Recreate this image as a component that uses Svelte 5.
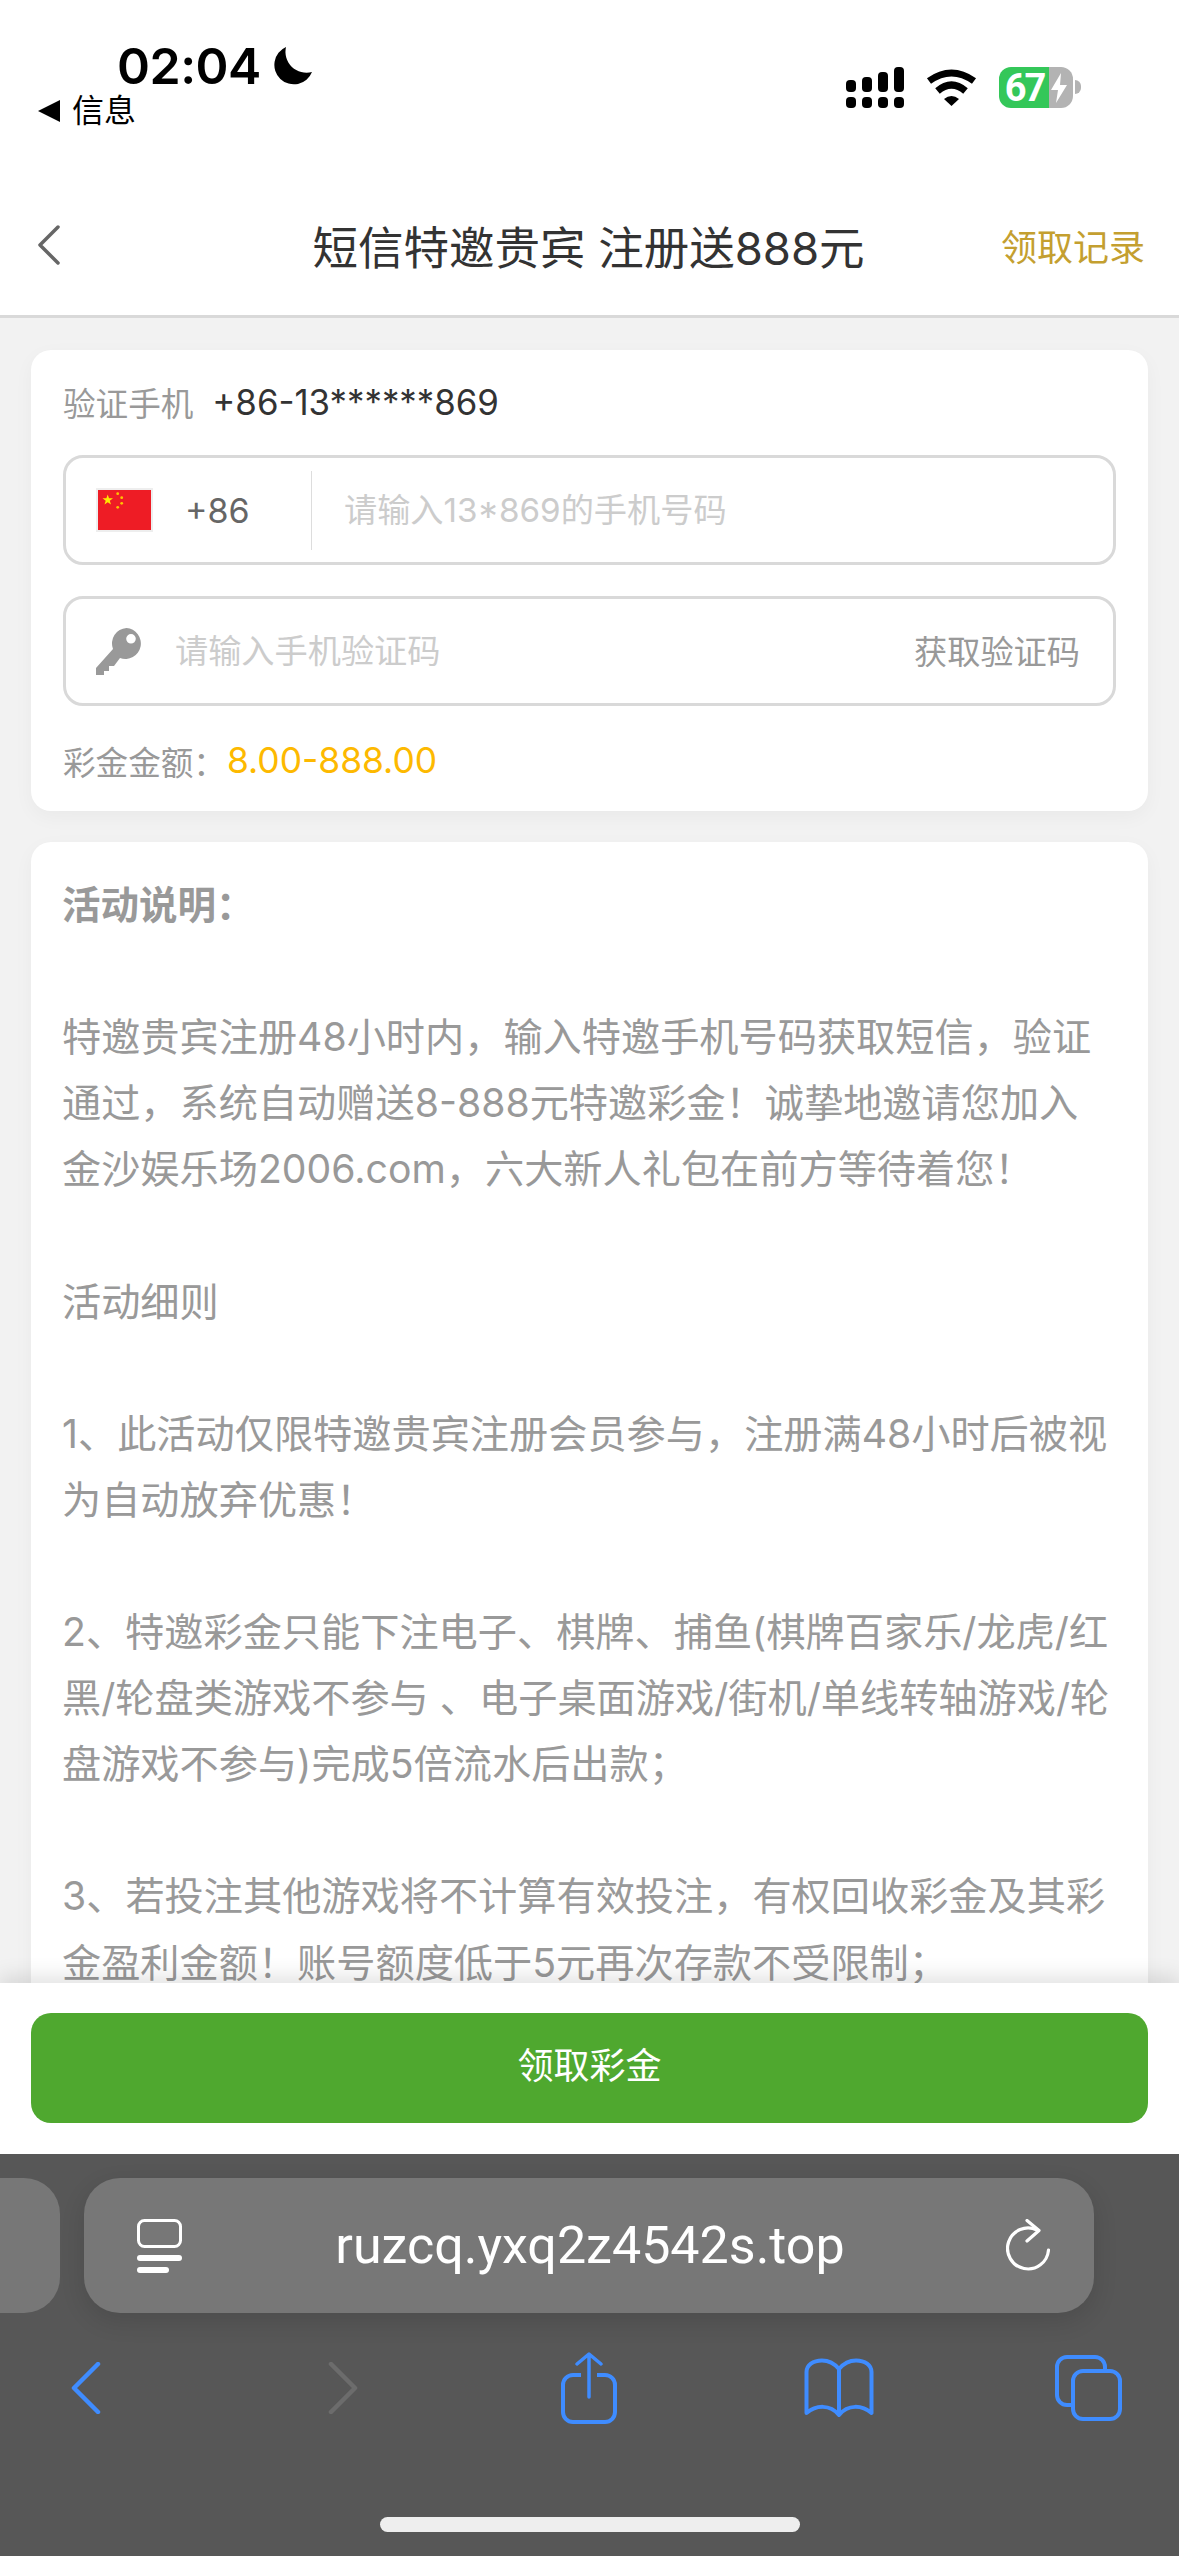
<script lang="ts">
  const lines = [
    "",
    "特邀贵宾注册48小时内，输入特邀手机号码获取短信，验证",
    "通过，系统自动赠送8-888元特邀彩金！诚挚地邀请您加入",
    "金沙娱乐场2006.com，六大新人礼包在前方等待着您！",
    "",
    "活动细则",
    "",
    "1、此活动仅限特邀贵宾注册会员参与，注册满48小时后被视",
    "为自动放弃优惠！",
    "",
    "2、特邀彩金只能下注电子、棋牌、捕鱼(棋牌百家乐/龙虎/红",
    "黑/轮盘类游戏不参与 、电子桌面游戏/街机/单线转轴游戏/轮",
    "盘游戏不参与)完成5倍流水后出款；",
    "",
    "3、若投注其他游戏将不计算有效投注，有权回收彩金及其彩",
    "金盈利金额！账号额度低于5元再次存款不受限制；",
  ];

  const signal = [
    [0, 13],
    [16, 10],
    [32, 5],
    [48, 0],
  ];
</script>

<div class="page">
  <div class="status">
    <div class="status-left">
      <div class="clock">
        <span class="time">02:04</span>
        <svg class="moon" viewBox="0 0 39 39" width="39" height="39">
          <path d="M13 0A19.5 19.5 0 1 0 39 25A21 21 0 0 1 13 0Z" fill="#000" />
        </svg>
      </div>
      <div class="origin">
        <svg viewBox="0 0 22 22" width="22" height="22"><path d="M22 0V22L0 11Z" fill="#000" /></svg>
        <span>信息</span>
      </div>
    </div>
    <div class="status-right">
      <svg viewBox="0 0 58 41" width="58" height="41">
        {#each signal as [x, top]}
          <rect {x} y={top} width="10" height={25 - top} rx="4" />
          <rect {x} y="30" width="10" height="11" rx="4" />
        {/each}
      </svg>
      <svg class="wifi" viewBox="0 0 51 37" width="51" height="37">
        <path d="M3 12Q25.5 -4 48 12" fill="none" stroke="#000" stroke-width="7" />
        <path d="M11.5 22Q25.5 10 39.5 22" fill="none" stroke="#000" stroke-width="7" />
        <path d="M18 30Q25.5 24 33 30L25.5 37Z" fill="#000" />
      </svg>
      <div class="battery">
        <div class="battery-level">67</div>
        <div class="battery-rest">
          <svg viewBox="0 0 18 30" width="18" height="30">
            <path d="M11 0L1 17H8L6 30L17 12H10Z" fill="#fff" />
          </svg>
        </div>
      </div>
      <div class="battery-nub"></div>
    </div>
  </div>

  <header class="nav">
    <svg viewBox="0 0 24 40" width="24" height="40">
      <path d="M21 2L3 20L21 38" fill="none" stroke="#666" stroke-width="3.5" stroke-linecap="round" stroke-linejoin="round" />
    </svg>
    <h1>短信特邀贵宾 注册送888元</h1>
    <span class="records">领取记录</span>
  </header>

  <main class="content">
    <section class="card form">
      <div class="verify">
        <span class="muted">验证手机</span>
        <span class="phone">+86-13******869</span>
      </div>
      <div class="field">
        <svg class="flag" viewBox="0 0 57 44" width="57" height="44">
          <rect width="57" height="44" fill="#eee" />
          <rect x="2" y="2" width="53" height="40" fill="#ee1c25" />
          <polygon points="11.7,6.5 13,10.3 17,10.3 13.8,12.7 15,16.5 11.7,14.2 8.5,16.5 9.7,12.7 6.5,10.3 10.4,10.3" fill="#ffe900" />
          <circle cx="21.7" cy="5.7" r="1.4" fill="#ffc400" />
          <circle cx="25.7" cy="9.7" r="1.4" fill="#ffc400" />
          <circle cx="25.7" cy="15.3" r="1.4" fill="#ffc400" />
          <circle cx="21.7" cy="19.3" r="1.4" fill="#ffc400" />
        </svg>
        <span class="code">+86</span>
        <span class="divider"></span>
        <span class="placeholder">请输入13*869的手机号码</span>
      </div>
      <div class="field">
        <svg class="key" viewBox="0 0 46 47" width="46" height="47">
          <path
            fill-rule="evenodd"
            d="M30.5 0A15.5 15.5 0 1 1 24 30L18 38H13V43H8V47H0V40L17 21A15.5 15.5 0 0 1 30.5 0ZM35 6A4.8 4.8 0 1 0 35 15.6A4.8 4.8 0 1 0 35 6Z"
            fill="#999"
          />
        </svg>
        <span class="placeholder short">请输入手机验证码</span>
        <span class="get-code">获取验证码</span>
      </div>
      <div class="amount">
        <span class="muted">彩金金额：</span><span class="range">8.00-888.00</span>
      </div>
    </section>

    <section class="card rules">
      <h2>活动说明：</h2>
      {#each lines as line}
        <p>{line}</p>
      {/each}
    </section>
  </main>

  <div class="action">
    <button>领取彩金</button>
  </div>

  <div class="browser">
    <div class="pills">
      <div class="pill-prev"></div>
      <div class="pill">
        <svg viewBox="0 0 45 54" width="45" height="54">
          <rect x="1.5" y="1.5" width="42" height="26" rx="6" fill="none" stroke="#fff" stroke-width="3" />
          <rect y="36" width="45" height="6" rx="3" fill="#fff" />
          <rect y="48" width="32" height="6" rx="3" fill="#fff" />
        </svg>
        <span class="url">ruzcq.yxq2z4542s.top</span>
        <svg viewBox="0 0 44 54" width="44" height="54">
          <path d="M42.500 31A20.500 20.500 0 1 1 31 11" fill="none" stroke="#fff" stroke-width="3.200" stroke-linecap="round" />
          <path d="M21 1.500L33 11.500L21 22" fill="none" stroke="#fff" stroke-width="3.200" stroke-linecap="round" stroke-linejoin="round" />
        </svg>
      </div>
    </div>
    <div class="tools">
      <svg viewBox="0 0 30 52" width="30" height="52">
        <path d="M27 2L3 26L27 50" fill="none" stroke="#3f8cff" stroke-width="4.500" stroke-linecap="round" stroke-linejoin="round" />
      </svg>
      <svg viewBox="0 0 30 52" width="30" height="52">
        <path d="M3 2L27 26L3 50" fill="none" stroke="#6c6c6c" stroke-width="4.500" stroke-linecap="round" stroke-linejoin="round" />
      </svg>
      <svg class="share" viewBox="0 0 56 72" width="56" height="72">
        <path d="M20 23H12A10 10 0 0 0 2 33V60A10 10 0 0 0 12 70H44A10 10 0 0 0 54 60V33A10 10 0 0 0 44 23H36" fill="none" stroke="#3f8cff" stroke-width="4" />
        <path d="M28 45V3M16 12L28 2L40 12" fill="none" stroke="#3f8cff" stroke-width="3.500" stroke-linecap="round" stroke-linejoin="round" />
      </svg>
      <svg class="book" viewBox="0 0 70 60" width="70" height="60">
        <path d="M35 11C30 5 24 2.500 18 2.500C9 2.500 2.500 7 2.500 14V55C12 47 26 46 35 57C44 46 58 47 67.500 55V14C67.500 7 61 2.500 52 2.500C46 2.500 40 5 35 11ZM35 11V55" fill="none" stroke="#3f8cff" stroke-width="4" stroke-linejoin="round" />
      </svg>
      <svg class="tabs" viewBox="0 0 67 66" width="67" height="66">
        <path d="M50 14V12A10 10 0 0 0 40 2H12A10 10 0 0 0 2 12V40A10 10 0 0 0 12 50H16" fill="none" stroke="#3f8cff" stroke-width="4" />
        <rect x="18" y="16" width="47" height="48" rx="10" fill="none" stroke="#3f8cff" stroke-width="4" />
      </svg>
    </div>
    <div class="home"></div>
  </div>
</div>

<style>
  :global(body) {
    margin: 0;
    background: #fff;
  }

  .page {
    display: flex;
    flex-direction: column;
    width: 1179px;
    height: 2556px;
    overflow: hidden;
    font-family: "Inter", "Noto Sans CJK SC", sans-serif;
    color: #333;
  }

  .status {
    display: flex;
    justify-content: space-between;
    height: 190px;
    padding: 0 98px 0 38px;
    box-sizing: border-box;
    flex: none;
  }

  .clock {
    display: flex;
    align-items: center;
    gap: 12px;
    padding: 40px 0 0 79px;
    height: 52px;
  }

  .time {
    font-size: 50px;
    font-weight: 600;
    line-height: 52px;
    color: #000;
    font-family: "Inter", sans-serif;
    letter-spacing: -0.5px;
  }

  .origin {
    display: flex;
    align-items: center;
    gap: 12px;
    font-size: 32px;
    line-height: 34px;
    color: #000;
    margin-top: 2px;
  }

  .status-right {
    display: flex;
    align-items: flex-start;
    padding-top: 67px;
  }

  .wifi {
    margin: 2px 22px 0;
  }

  .battery {
    display: flex;
    width: 74px;
    height: 41px;
  }

  .battery-level {
    display: flex;
    align-items: center;
    justify-content: center;
    width: 50px;
    padding-left: 1px;
    box-sizing: border-box;
    border-radius: 12px 0 0 12px;
    background: #34c759;
    color: #fff;
    font-family: "Roboto", sans-serif;
    font-size: 38px;
    font-weight: 700;
    letter-spacing: -2px;
  }

  .battery-rest {
    display: flex;
    align-items: center;
    flex: 1;
    padding-left: 1px;
    border-radius: 0 12px 12px 0;
    background: #b3b3b3;
  }

  .battery-nub {
    width: 6px;
    height: 14px;
    margin: 13px 0 0 2px;
    background: #b3b3b3;
    border-radius: 0 7px 7px 0;
  }

  .nav {
    display: grid;
    grid-template-columns: 1fr auto 1fr;
    align-items: center;
    height: 128px;
    padding: 0 34px 16px 37px;
    box-sizing: border-box;
    background: #fff;
    border-bottom: 3px solid #d9d9d9;
    flex: none;
  }

  .nav h1 {
    margin: 0 5px 0 0;
    font-size: 45.500px;
    font-weight: 400;
    white-space: nowrap;
    color: #333;
  }

  .records {
    justify-self: end;
    font-size: 36px;
    color: #c49f30;
    white-space: nowrap;
  }

  .content {
    flex: 1;
    min-height: 0;
    overflow: hidden;
    display: flex;
    flex-direction: column;
    gap: 31px;
    padding: 32px 31px 0;
    background: #f2f2f2;
  }

  .card {
    background: #fff;
    border-radius: 20px;
    box-shadow: 0 6px 20px rgba(0, 0, 0, 0.04);
    flex: none;
  }

  .form {
    height: 461px;
    padding: 0 32px;
    box-sizing: border-box;
  }

  .verify {
    display: flex;
    align-items: center;
    gap: 19px;
    height: 103px;
    margin-bottom: 2px;
  }

  .muted {
    font-size: 32.600px;
    color: #999;
  }

  .phone {
    font-size: 34.800px;
    color: #333;
  }

  .field {
    display: flex;
    align-items: center;
    height: 110px;
    margin-bottom: 31px;
    padding: 0 33px 0 30px;
    box-sizing: border-box;
    border: 3px solid #d9d9d9;
    border-radius: 20px;
  }

  .flag {
    flex: none;
  }

  .code {
    width: 158px;
    padding-left: 32px;
    box-sizing: border-box;
    font-size: 34px;
    color: #666;
  }

  .divider {
    width: 1px;
    height: 79px;
    margin-right: 32px;
    background: #ddd;
  }

  .placeholder {
    padding-bottom: 5px;
    font-size: 33.200px;
    color: #ccc;
    white-space: nowrap;
  }

  .short {
    flex: 1;
    margin-left: 33px;
  }

  .get-code {
    padding-bottom: 4px;
    font-size: 33.200px;
    color: #999;
  }

  .key {
    flex: none;
  }

  .amount {
    display: flex;
    align-items: center;
    height: 46px;
  }

  .range {
    margin-left: 1px;
    font-size: 35.400px;
    color: #fdb900;
  }

  .rules {
    padding: 30px 32px 40px 31px;
  }

  .rules h2 {
    margin: 0;
    font-size: 38.500px;
    font-weight: 700;
    line-height: 66.100px;
    color: #999;
  }

  .rules p {
    margin: 0;
    min-height: 66.100px;
    font-size: 39.200px;
    line-height: 66.100px;
    color: #999;
    white-space: nowrap;
  }

  .action {
    position: relative;
    height: 171px;
    padding: 30px 31px 0;
    box-sizing: border-box;
    background: #fff;
    box-shadow: 0 -6px 20px rgba(0, 0, 0, 0.12);
    flex: none;
  }

  .action button {
    display: block;
    width: 100%;
    height: 110px;
    padding: 0 0 11px;
    border: 0;
    border-radius: 20px;
    background: #4fa82f;
    color: #fff;
    font-family: inherit;
    font-size: 36px;
  }

  .browser {
    position: relative;
    height: 402px;
    background: #575757;
    flex: none;
  }

  .pills {
    display: flex;
    gap: 24px;
    padding-top: 24px;
  }

  .pill-prev {
    width: 60px;
    height: 135px;
    border-radius: 0 36px 36px 0;
    background: #777;
  }

  .pill {
    display: flex;
    align-items: center;
    justify-content: space-between;
    width: 1010px;
    height: 135px;
    padding: 0 44px 0 53px;
    box-sizing: border-box;
    border-radius: 36px;
    background: #777;
    box-shadow: 0 8px 24px rgba(0, 0, 0, 0.12);
  }

  .url {
    margin-right: 8px;
    font-size: 52px;
    color: #fff;
    font-family: "Roboto", sans-serif;
  }

  .tools {
    display: grid;
    grid-template-columns: 257px 233px 243px 251px 67px;
    align-items: center;
    height: 70px;
    padding: 39px 0 0 71px;
  }

  .home {
    position: absolute;
    left: 380px;
    top: 363px;
    width: 420px;
    height: 15px;
    border-radius: 8px;
    background: #eee;
  }
</style>
